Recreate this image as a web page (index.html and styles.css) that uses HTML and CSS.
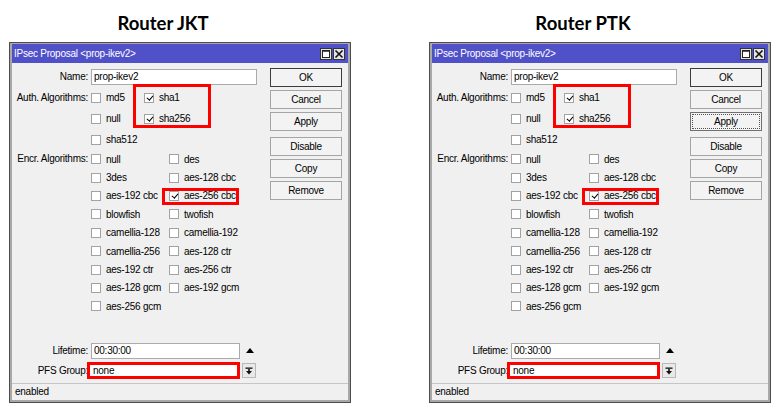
FILE: index.html
```html
<!DOCTYPE html>
<html lang="en">
<head>
    <meta charset="UTF-8">
    <meta name="viewport" content="width=device-width, initial-scale=1.0">
    <title>IPsec Proposal</title>
    <link rel="stylesheet" href="styles.css">
</head>
<body>
    <div class="page">

        <div class="panel">
            <h2>Router JKT</h2>
            <div class="window">
                <div class="titlebar">
                    <span class="title">IPsec Proposal &lt;prop-ikev2&gt;</span>
                    <span class="tbtn"><svg width="10" height="10" viewBox="0 0 10 10"><rect x="1.5" y="1.5" width="7" height="7" fill="#fff" stroke="#222" stroke-width="1"/><line x1="1.5" y1="2" x2="8.5" y2="2" stroke="#222" stroke-width="1.5"/></svg></span>
                    <span class="tbtn"><svg width="10" height="10" viewBox="0 0 10 10"><path d="M1.5 1.5 L8.5 8.5 M8.5 1.5 L1.5 8.5" stroke="#111" stroke-width="1.6"/></svg></span>
                </div>
                <div class="wbody">
                    <div class="main">
                        <div class="form">
                            <div class="field name">
                                <label>Name:</label>
                                <div class="input wide">prop-ikev2</div>
                            </div>
                            <div class="field auth">
                                <label>Auth. Algorithms:</label>
                                <div class="checks">
                                    <span class="cb"><i class="box"></i>md5</span>
                                    <div class="pair">
                                        <span class="cb"><i class="box on"></i>sha1</span>
                                        <span class="cb"><i class="box on"></i>sha256</span>
                                    </div>
                                    <span class="cb"><i class="box"></i>null</span>
                                    <span class="cb"><i class="box"></i>sha512</span>
                                </div>
                            </div>
                            <div class="field encr">
                                <label>Encr. Algorithms:</label>
                                <div class="checks">
                                    <span class="cb"><i class="box"></i>null</span>
                                    <span class="cb"><i class="box"></i>des</span>
                                    <span class="cb"><i class="box"></i>3des</span>
                                    <span class="cb"><i class="box"></i>aes-128 cbc</span>
                                    <span class="cb"><i class="box"></i>aes-192 cbc</span>
                                    <span class="cb hl"><i class="box on"></i>aes-256 cbc</span>
                                    <span class="cb"><i class="box"></i>blowfish</span>
                                    <span class="cb"><i class="box"></i>twofish</span>
                                    <span class="cb"><i class="box"></i>camellia-128</span>
                                    <span class="cb"><i class="box"></i>camellia-192</span>
                                    <span class="cb"><i class="box"></i>camellia-256</span>
                                    <span class="cb"><i class="box"></i>aes-128 ctr</span>
                                    <span class="cb"><i class="box"></i>aes-192 ctr</span>
                                    <span class="cb"><i class="box"></i>aes-256 ctr</span>
                                    <span class="cb"><i class="box"></i>aes-128 gcm</span>
                                    <span class="cb"><i class="box"></i>aes-192 gcm</span>
                                    <span class="cb"><i class="box"></i>aes-256 gcm</span>
                                </div>
                            </div>
                            <div class="lower">
                                <div class="field">
                                    <label>Lifetime:</label>
                                    <div class="ctl">
                                        <div class="input mid">00:30:00</div>
                                        <span class="spin"></span>
                                    </div>
                                </div>
                                <div class="field">
                                    <label>PFS Group:</label>
                                    <div class="ctl">
                                        <div class="pick">none</div>
                                        <span class="drop"><svg width="8" height="8" viewBox="0 0 8 8"><rect x="0.5" y="0.5" width="7" height="1.3" fill="#111"/><rect x="3.2" y="2" width="1.6" height="2.5" fill="#111"/><path d="M1 4 L7 4 L4 7.5 Z" fill="#111"/></svg></span>
                                    </div>
                                </div>
                            </div>
                        </div>
                        <div class="buttons">
                            <div class="btn default">OK</div>
                            <div class="btn">Cancel</div>
                            <div class="btn">Apply</div>
                            <div class="btn gap">Disable</div>
                            <div class="btn">Copy</div>
                            <div class="btn">Remove</div>
                        </div>
                    </div>
                    <div class="status">enabled</div>
                </div>
            </div>
        </div>

        <div class="panel">
            <h2>Router PTK</h2>
            <div class="window">
                <div class="titlebar">
                    <span class="title">IPsec Proposal &lt;prop-ikev2&gt;</span>
                    <span class="tbtn"><svg width="10" height="10" viewBox="0 0 10 10"><rect x="1.5" y="1.5" width="7" height="7" fill="#fff" stroke="#222" stroke-width="1"/><line x1="1.5" y1="2" x2="8.5" y2="2" stroke="#222" stroke-width="1.5"/></svg></span>
                    <span class="tbtn"><svg width="10" height="10" viewBox="0 0 10 10"><path d="M1.5 1.5 L8.5 8.5 M8.5 1.5 L1.5 8.5" stroke="#111" stroke-width="1.6"/></svg></span>
                </div>
                <div class="wbody">
                    <div class="main">
                        <div class="form">
                            <div class="field name">
                                <label>Name:</label>
                                <div class="input wide">prop-ikev2</div>
                            </div>
                            <div class="field auth">
                                <label>Auth. Algorithms:</label>
                                <div class="checks">
                                    <span class="cb"><i class="box"></i>md5</span>
                                    <div class="pair">
                                        <span class="cb"><i class="box on"></i>sha1</span>
                                        <span class="cb"><i class="box on"></i>sha256</span>
                                    </div>
                                    <span class="cb"><i class="box"></i>null</span>
                                    <span class="cb"><i class="box"></i>sha512</span>
                                </div>
                            </div>
                            <div class="field encr">
                                <label>Encr. Algorithms:</label>
                                <div class="checks">
                                    <span class="cb"><i class="box"></i>null</span>
                                    <span class="cb"><i class="box"></i>des</span>
                                    <span class="cb"><i class="box"></i>3des</span>
                                    <span class="cb"><i class="box"></i>aes-128 cbc</span>
                                    <span class="cb"><i class="box"></i>aes-192 cbc</span>
                                    <span class="cb hl"><i class="box on"></i>aes-256 cbc</span>
                                    <span class="cb"><i class="box"></i>blowfish</span>
                                    <span class="cb"><i class="box"></i>twofish</span>
                                    <span class="cb"><i class="box"></i>camellia-128</span>
                                    <span class="cb"><i class="box"></i>camellia-192</span>
                                    <span class="cb"><i class="box"></i>camellia-256</span>
                                    <span class="cb"><i class="box"></i>aes-128 ctr</span>
                                    <span class="cb"><i class="box"></i>aes-192 ctr</span>
                                    <span class="cb"><i class="box"></i>aes-256 ctr</span>
                                    <span class="cb"><i class="box"></i>aes-128 gcm</span>
                                    <span class="cb"><i class="box"></i>aes-192 gcm</span>
                                    <span class="cb"><i class="box"></i>aes-256 gcm</span>
                                </div>
                            </div>
                            <div class="lower">
                                <div class="field">
                                    <label>Lifetime:</label>
                                    <div class="ctl">
                                        <div class="input mid">00:30:00</div>
                                        <span class="spin"></span>
                                    </div>
                                </div>
                                <div class="field">
                                    <label>PFS Group:</label>
                                    <div class="ctl">
                                        <div class="pick">none</div>
                                        <span class="drop"><svg width="8" height="8" viewBox="0 0 8 8"><rect x="0.5" y="0.5" width="7" height="1.3" fill="#111"/><rect x="3.2" y="2" width="1.6" height="2.5" fill="#111"/><path d="M1 4 L7 4 L4 7.5 Z" fill="#111"/></svg></span>
                                    </div>
                                </div>
                            </div>
                        </div>
                        <div class="buttons">
                            <div class="btn default">OK</div>
                            <div class="btn">Cancel</div>
                            <div class="btn focus">Apply</div>
                            <div class="btn gap">Disable</div>
                            <div class="btn">Copy</div>
                            <div class="btn">Remove</div>
                        </div>
                    </div>
                    <div class="status">enabled</div>
                </div>
            </div>
        </div>

    </div>
</body>
</html>
```

FILE: styles.css
```css
body {
    margin: 0;
    background-color: #fff;
    font-family: "Liberation Sans", Arial, sans-serif;
    font-size: 10px;
    letter-spacing: -0.25px;
    color: #000;
}
.page {
    display: flex;
    gap: 78px;
    padding-left: 9px;
}
.panel {
    width: 342px;
}
.panel h2 {
    margin: 0;
    height: 42px;
    padding: 3px 34px 0 0;
    box-sizing: border-box;
    display: flex;
    align-items: center;
    justify-content: center;
    font-family: Lato, "Liberation Sans", sans-serif;
    font-size: 18.5px;
    font-weight: bold;
    letter-spacing: 0;
}

/* window frame */
.window {
    height: 361px;
    box-sizing: border-box;
    border: 1px solid #4d4d4d;
    padding: 1px 2px 2px;
    background-color: #a8a8a8;
    display: flex;
    flex-direction: column;
}
.titlebar {
    height: 19px;
    flex: none;
    background-color: #5050c8;
    color: #fff;
    display: flex;
    align-items: center;
    gap: 1px;
    padding: 0 3px 0 2px;
}
.titlebar .title {
    flex: 1;
}
.tbtn {
    width: 12px;
    height: 12px;
    box-sizing: border-box;
    border: 1px solid #333;
    background-color: #e4e4e4;
    display: flex;
    align-items: center;
    justify-content: center;
}
.wbody {
    flex: 1;
    background-color: #f0f0f0;
    display: flex;
    flex-direction: column;
}
.main {
    flex: 1;
    display: flex;
    padding-top: 3px;
}
.form {
    flex: 1;
    display: flex;
    flex-direction: column;
}

/* label + control rows */
.field {
    display: grid;
    grid-template-columns: 76px 1fr;
    column-gap: 3px;
}
.field > label {
    text-align: right;
    white-space: nowrap;
}
.name {
    height: 21px;
    align-items: center;
}
.input {
    height: 16px;
    box-sizing: border-box;
    border: 1px solid #aaa;
    background-color: #fff;
    padding-left: 2px;
    line-height: 14px;
}
.input.wide {
    width: 166px;
}
.input.mid {
    width: 149px;
}

/* checkbox grids */
.checks {
    display: grid;
}
.auth > label {
    line-height: 21px;
}
.auth .checks {
    grid-template-columns: 53px auto;
    grid-auto-rows: 21px;
}
.encr > label {
    line-height: 18.4px;
}
.encr .checks {
    grid-template-columns: 78px auto;
    grid-auto-rows: 18.4px;
}
.cb {
    display: flex;
    align-items: center;
    gap: 5px;
    white-space: nowrap;
}
.box {
    width: 10px;
    height: 10px;
    flex: none;
    box-sizing: border-box;
    border: 1px solid #a2a2a2;
    background-color: #fff;
    position: relative;
}
.box.on::after {
    content: "";
    position: absolute;
    left: 2.5px;
    top: 0px;
    width: 2.5px;
    height: 5px;
    border: solid #000;
    border-width: 0 1.6px 1.6px 0;
    transform: rotate(40deg);
}

/* red highlight frames */
.pair {
    grid-row: span 2;
    align-self: start;
    width: 78px;
    height: 44px;
    box-sizing: border-box;
    margin: -3px 0 0 -11px;
    padding-left: 8px;
    border: 3px solid #f00;
}
.pair .cb {
    height: 21px;
}
.cb.hl {
    position: relative;
}
.cb.hl::after {
    content: "";
    position: absolute;
    left: -7px;
    top: 1px;
    bottom: 0;
    width: 77px;
    box-sizing: border-box;
    border: 3px solid #f00;
}

/* lifetime / pfs */
.lower {
    margin-top: auto;
    padding-bottom: 3px;
    display: flex;
    flex-direction: column;
    gap: 1px;
}
.lower .field {
    height: 19px;
    align-items: center;
}
.ctl {
    display: flex;
    align-items: center;
}
.spin {
    margin-left: 6px;
    width: 0;
    height: 0;
    border-left: 4px solid transparent;
    border-right: 4px solid transparent;
    border-bottom: 5px solid #000;
}
.pick {
    margin-left: -4px;
    width: 153px;
    height: 17px;
    box-sizing: border-box;
    border: 3px solid #f00;
    background-color: #fff;
    padding-left: 3px;
    line-height: 11px;
}
.drop {
    margin-left: 2px;
    width: 14px;
    height: 15px;
    box-sizing: border-box;
    border: 1px solid #b8b8b8;
    background-color: #e9e9e9;
    display: flex;
    align-items: center;
    justify-content: center;
}

/* side buttons */
.buttons {
    width: 72px;
    margin: 2px 6px 0 0;
    display: flex;
    flex-direction: column;
    gap: 3px;
}
.btn {
    height: 19px;
    box-sizing: border-box;
    border: 1px solid #a5a5a5;
    background-color: #f3f3f3;
    display: flex;
    align-items: center;
    justify-content: center;
}
.btn.default {
    border-color: #3c3c3c;
}
.btn.gap {
    margin-top: 3px;
}
.btn.focus {
    border-color: #707070;
    outline: 1px dotted #555;
    outline-offset: -3px;
}

.status {
    height: 16px;
    flex: none;
    border-top: 1px solid #c6c6c6;
    padding-left: 3px;
    line-height: 16px;
}
```
